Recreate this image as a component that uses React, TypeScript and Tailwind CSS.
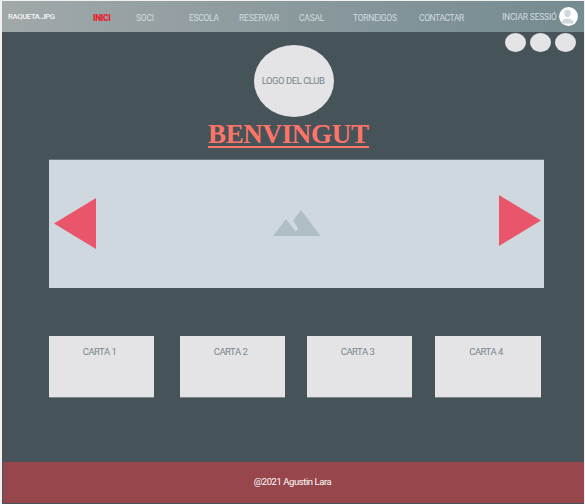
const navItems = [
  { label: 'SOCI', style: 'w-[18px] tracking-[-0.2px]' },
  { label: 'ESCOLA', style: 'w-[31px] tracking-[-0.3px]' },
  { label: 'RESERVAR', style: 'w-[41px] tracking-[-0.12px]' },
  { label: 'CASAL', style: 'w-[26px] tracking-[-0.2px]' },
  { label: 'TORNEIGOS', style: 'w-[45px] tracking-[-0.25px]' },
  { label: 'CONTACTAR', style: 'w-[46px] tracking-[-0.4px]' },
];

const cards = ['CARTA 1', 'CARTA 2', 'CARTA 3', 'CARTA 4'];

function Header() {
  return (
    <header className="grid h-[31px] grid-cols-[85px_43px_53px_50px_60px_54px_66px_83px_57px_19px] items-center whitespace-nowrap bg-linear-to-r from-[#a1a8aa] to-[#748b90] pl-[6px] text-[8.5px] leading-[10px] text-[#d2dbe0]">
      <span className="text-[7.7px] font-medium tracking-[-0.35px] text-[#f5f6f6]">RAQUETA.JPG</span>
      <span className="pt-[3px] font-black tracking-[-0.35px] text-[#e3232f]">INICI</span>
      {navItems.map((item) => (
        <span key={item.label} className={`${item.style} pt-[3px]`}>{item.label}</span>
      ))}
      <span className="pt-px tracking-[-0.2px]">INCIAR SESSIÓ</span>
      <svg className="h-[19px] w-[19px]" viewBox="0 0 19 19">
        <circle cx="9.5" cy="9.5" r="9.4" fill="#fff" />
        <ellipse cx="8.5" cy="6.2" rx="3.2" ry="3.8" fill="#cfd8dd" />
        <path d="M3 16.5V14.5C4 12.5 6.5 11.6 8.5 11.6S13 12.5 14.5 14.5V16.5Z" fill="#cfd8dd" />
      </svg>
    </header>
  );
}

function Carousel() {
  return (
    <section className="mt-[7px] ml-[47px] flex h-[129px] w-[495px] justify-between border-t border-[#6b797f] bg-[#cfd8de]">
      <svg className="mt-[38px] ml-[5px] h-[51px] w-[42px]" viewBox="0 0 42 51">
        <path d="M0 25.5 42 0V51Z" fill="#e9566c" />
      </svg>
      <svg className="mt-[50px] mr-[2px] h-[26px] w-[48px]" viewBox="0 0 48 26">
        <path d="M0 26 13 9 22.5 21.5 25.5 19 20 10.5 28 0 47.5 26Z" fill="#afbec5" />
      </svg>
      <svg className="mt-[35px] mr-[3px] h-[51px] w-[42px]" viewBox="0 0 42 51">
        <path d="M42 25.5 0 0V51Z" fill="#e9566c" />
      </svg>
    </section>
  );
}

export default function App() {
  return (
    <div className="h-[504px] w-[585px] overflow-hidden bg-[#f1f2ef] pt-px pr-px pl-[2px] font-[Roboto,sans-serif]">
      <div className="flex h-[503px] flex-col bg-[#465358]">
        <Header />
        <div className="flex h-[85px] justify-between">
          <div className="mt-[13px] ml-[252px] flex h-[72px] w-[80px] items-center justify-center rounded-[50%] bg-[#e4e4e7] pr-[2px] text-[9.5px] tracking-[-0.48px] whitespace-nowrap text-[#78868c]">
            LOGO DEL CLUB
          </div>
          <div className="mt-px mr-[8px] flex gap-[4px]">
            <span className="h-[19px] w-[21px] rounded-[50%] bg-[#e4e4e7]" />
            <span className="h-[19px] w-[21px] rounded-[50%] bg-[#e4e4e7]" />
            <span className="h-[19px] w-[21px] rounded-[50%] bg-[#e4e4e7]" />
          </div>
        </div>
        <h1 className="ml-[206px] h-[31px] w-[161px] border-b-2 border-[#ff7468] font-['Liberation_Serif',serif] text-[27px] leading-[35px] font-bold tracking-[-0.33px] whitespace-nowrap text-[#ff7468]">
          BENVINGUT
        </h1>
        <div className="h-[4px]" />
        <Carousel />
        <section className="mt-[48px] grid grid-cols-[131px_127px_128px_106px] pl-[47px]">
          {cards.map((card, index) => (
            <article
              key={card}
              className={`h-[62px] border-b border-[#7d878b] bg-[#e4e4e7] pt-[9px] pr-[4px] text-center text-[9.5px] leading-[14px] tracking-[-0.5px] text-[#78868c] ${index === 3 ? 'w-[106px]' : 'w-[105px]'}`}
            >
              {card}
            </article>
          ))}
        </section>
        <footer className="mt-auto mb-px ml-px flex h-[41px] items-center justify-center bg-[#97464b] pr-[2px] text-[9.5px] tracking-[-0.43px] text-white">
          @2021 Agustin Lara
        </footer>
      </div>
    </div>
  );
}
